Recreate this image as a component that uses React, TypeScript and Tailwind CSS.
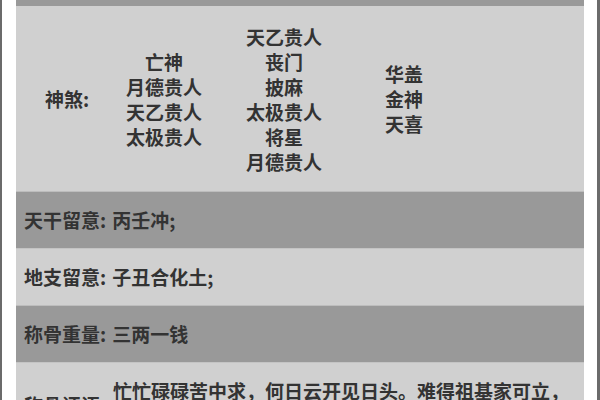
const shensha: string[][] = [
  ["亡神", "月德贵人", "天乙贵人", "太极贵人"],
  ["天乙贵人", "丧门", "披麻", "太极贵人", "将星", "月德贵人"],
  ["华盖", "金神", "天喜"],
];

const rows = [
  { label: "天干留意:", value: "丙壬冲;", dark: true },
  { label: "地支留意:", value: "子丑合化土;", dark: false },
  { label: "称骨重量:", value: "三两一钱", dark: true },
];

export default function App() {
  return (
    <div
      className="w-[600px] h-[400px] overflow-hidden bg-white border-l-2 border-r-[3px] border-[#6b6b6b] pl-[14px] pr-[13px] font-bold text-[19px] text-[#333]"
      style={{ fontFamily: '"Noto Sans CJK SC", "Noto Sans", sans-serif' }}
    >
      <div className="h-[6px] bg-[#999]" />

      <div className="h-[185px] bg-[#d0d0d0] grid grid-cols-[88px_120px_120px_120px_1fr] items-center">
        <div className="pl-[29px] leading-[25px]">神煞:</div>
        {shensha.map((col, i) => (
          <div key={i} className="flex flex-col items-center leading-[25px]">
            {col.map((s, j) => (
              <div key={j}>{s}</div>
            ))}
          </div>
        ))}
        <div />
      </div>

      {rows.map((r) => (
        <div
          key={r.label}
          className={
            r.dark
              ? "h-[57px] flex items-center px-2 bg-[#999] border-t border-[#bdbdbd]"
              : "h-[57px] flex items-center px-2 bg-[#d0d0d0] border-t border-[#c4c4c4]"
          }
        >
          <span>{r.label}</span>
          <span className="ml-[6px]">{r.value}</span>
        </div>
      ))}

      <div className="bg-[#d0d0d0] border-t border-[#c4c4c4] flex items-center px-2 pt-[14px] pb-4">
        <div className="w-[89px] shrink-0">称骨评语:</div>
        <div className="leading-[28px]">
          忙忙碌碌苦中求，何日云开见日头。难得祖基家可立，中年衣食渐无忧。
        </div>
      </div>
    </div>
  );
}
